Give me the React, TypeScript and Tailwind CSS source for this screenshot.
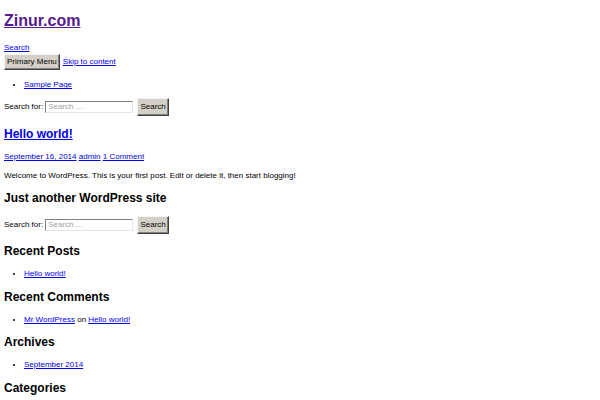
const font = { fontFamily: '"Liberation Sans", Arial, sans-serif' }

function Btn({ children }: { children: string }) {
  return (
    <button
      type="button"
      className="h-[16px] px-[2px] bg-[#d4d0c8] text-black text-[8px] leading-[10px] border border-t-[#f4f4f4] border-l-[#f4f4f4] border-r-[#404040] border-b-[#404040] shadow-[inset_-1px_-1px_0_#808080]"
    >
      {children}
    </button>
  )
}

function SearchForm({ mt }: { mt: string }) {
  return (
    <form className={`flex items-center h-[18px] ${mt}`}>
      <label className="flex items-center text-[8px] leading-[10px]">
        <span>Search for:</span>
        <input
          type="search"
          placeholder="Search …"
          className="ml-[2px] w-[88px] h-[12px] px-[2px] text-[8px] bg-white border border-t-[#808080] border-l-[#808080] border-r-[#e4e4e4] border-b-[#e4e4e4] placeholder:text-[#a0a0a0] outline-none"
        />
      </label>
      <button
        type="button"
        className="ml-[4px] h-[18px] w-[32px] bg-[#d4d0c8] text-black text-[8px] leading-[10px] border border-t-[#f4f4f4] border-l-[#f4f4f4] border-r-[#404040] border-b-[#404040] shadow-[inset_-1px_-1px_0_#808080]"
      >
        Search
      </button>
    </form>
  )
}

function H({ children, mt }: { children: React.ReactNode; mt: string }) {
  return <h2 className={`text-[12px] leading-[14px] font-bold ${mt}`}>{children}</h2>
}

const link = 'text-[#0000ee] underline'

export default function App() {
  return (
    <div style={font} className="w-[600px] h-[400px] overflow-hidden bg-white text-black px-[4px] flex flex-col">
      <h1 className="mt-[11.5px] text-[16px] leading-[18px] font-bold">
        <a href="#" className="text-[#551a8b] underline">Zinur.com</a>
      </h1>
      <div className="mt-[13.7px] text-[8px] leading-[10px]">
        <a href="#" className={link}>Search</a>
      </div>
      <nav className="mt-[0.8px] flex items-center gap-[3px] text-[8px] leading-[10px]">
        <Btn>Primary Menu</Btn>
        <a href="#" className={link}>Skip to content</a>
      </nav>
      <ul className="mt-[10.2px] list-disc pl-[20px] text-[8px] leading-[10px]">
        <li><a href="#" className={link}>Sample Page</a></li>
      </ul>
      <SearchForm mt="mt-[7.8px]" />

      <H mt="mt-[11.3px]">
        <a href="#" className={link}>Hello world!</a>
      </H>
      <div className="mt-[10.4px] text-[8px] leading-[10px]">
        <a href="#" className={link}>September 16, 2014</a>{' '}
        <a href="#" className={link}>admin</a>{' '}
        <a href="#" className={link}>1 Comment</a>
      </div>
      <p className="mt-[9.5px] text-[8px] leading-[10px]">
        Welcome to WordPress. This is your first post. Edit or delete it, then start blogging!
      </p>

      <H mt="mt-[10.1px]">Just another WordPress site</H>
      <SearchForm mt="mt-[10.7px]" />

      <H mt="mt-[10.1px]">Recent Posts</H>
      <ul className="mt-[10.6px] list-disc pl-[20px] text-[8px] leading-[10px]">
        <li><a href="#" className={link}>Hello world!</a></li>
      </ul>

      <H mt="mt-[11.4px]">Recent Comments</H>
      <ul className="mt-[10.6px] list-disc pl-[20px] text-[8px] leading-[10px]">
        <li>
          <a href="#" className={link}>Mr WordPress</a> on <a href="#" className={link}>Hello world!</a>
        </li>
      </ul>

      <H mt="mt-[10.4px]">Archives</H>
      <ul className="mt-[10.6px] list-disc pl-[20px] text-[8px] leading-[10px]">
        <li><a href="#" className={link}>September 2014</a></li>
      </ul>

      <H mt="mt-[11.4px]">Categories</H>
    </div>
  )
}
